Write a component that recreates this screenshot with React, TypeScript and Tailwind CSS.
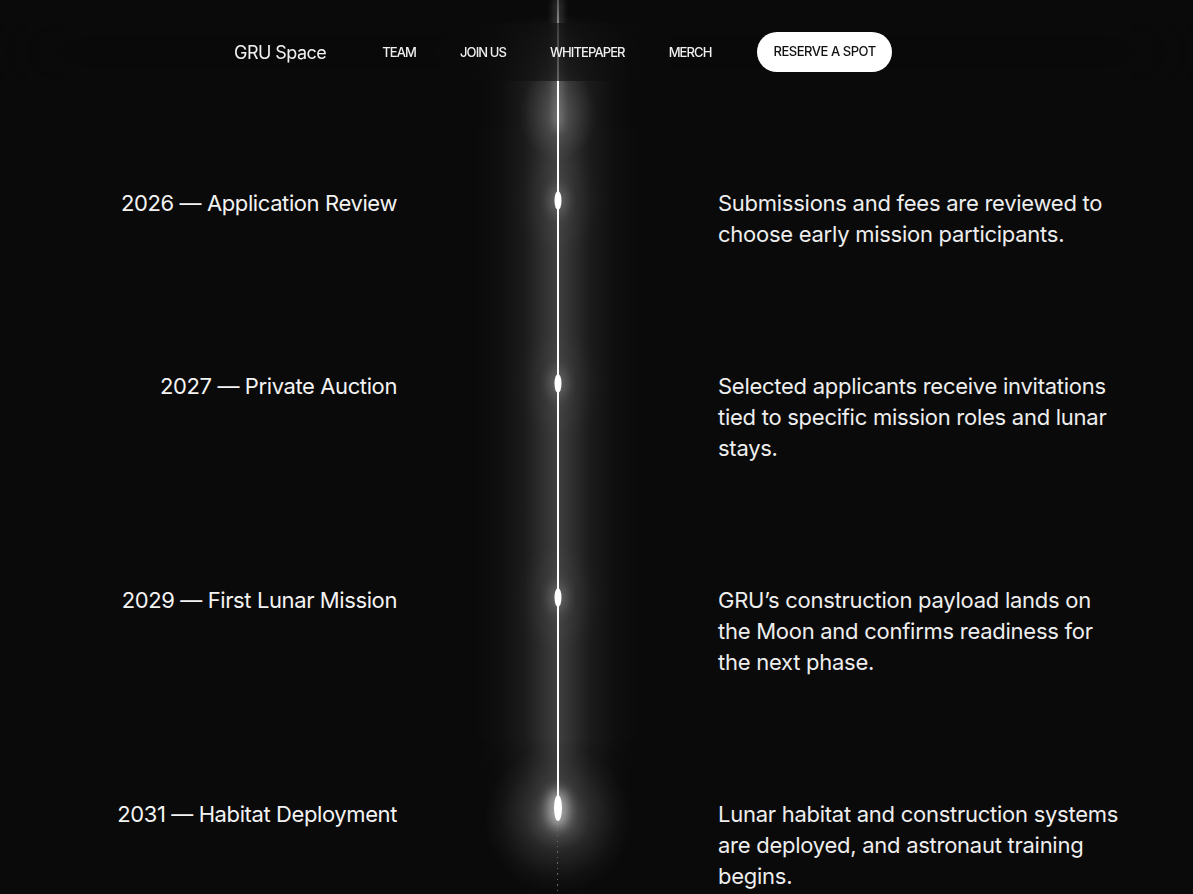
import React from "react";

type Milestone = {
  title: string;
  lines: string[];
};

const milestones: Milestone[] = [
  {
    title: "2026 — Application Review",
    lines: ["Submissions and fees are reviewed to", "choose early mission participants."],
  },
  {
    title: "2027 — Private Auction",
    lines: [
      "Selected applicants receive invitations",
      "tied to specific mission roles and lunar",
      "stays.",
    ],
  },
  {
    title: "2029 — First Lunar Mission",
    lines: [
      "GRU’s construction payload lands on",
      "the Moon and confirms readiness for",
      "the next phase.",
    ],
  },
  {
    title: "2031 — Habitat Deployment",
    lines: [
      "Lunar habitat and construction systems",
      "are deployed, and astronaut training",
      "begins.",
    ],
  },
];

// soft band of light that runs along the rail
const band =
  "bg-[linear-gradient(90deg,transparent_24%,rgba(255,255,255,0.02)_32%,rgba(255,255,255,0.07)_40%,rgba(255,255,255,0.16)_46%,rgba(255,255,255,0.22)_50%,rgba(255,255,255,0.16)_54%,rgba(255,255,255,0.07)_60%,rgba(255,255,255,0.02)_68%,transparent_76%)]";

const Nav: React.FC = () => (
  <header className="absolute inset-x-0 top-[23px] z-20 flex h-[58px] items-center bg-[#0a0a0a]/40 pl-[234px] backdrop-blur-2xl">
    <div className="text-[18px] tracking-[-0.03em] text-[#f2f2f2]">GRU Space</div>
    <nav className="ml-[56px] mt-[2px] flex items-center gap-[44px] text-[13px] font-medium tracking-[-0.07em] text-[#f0f0f0]">
      <a>TEAM</a>
      <a>JOIN US</a>
      <a>WHITEPAPER</a>
      <a>MERCH</a>
    </nav>
    <button className="ml-[46px] flex h-[40px] items-center rounded-full bg-white px-[16px] text-[13px] font-medium tracking-[-0.035em] text-[#111]">
      RESERVE A SPOT
    </button>
  </header>
);

const Dot: React.FC<{ last?: boolean }> = ({ last }) =>
  last ? (
    <span className="absolute left-1/2 top-[56px] z-10 h-[26px] w-[8px] -translate-x-1/2 rounded-[50%] bg-white shadow-[0_0_12px_6px_rgba(255,255,255,0.5)]" />
  ) : (
    <span className="absolute left-1/2 top-[63px] z-10 h-[19px] w-[7px] -translate-x-1/2 rounded-[50%] bg-white shadow-[0_0_12px_5px_rgba(255,255,255,0.18),0_0_40px_22px_rgba(255,255,255,0.06)]" />
  );

const App: React.FC = () => {
  return (
    <div className="relative min-h-screen overflow-hidden bg-[#0a0a0a] font-['Inter','Liberation_Sans',sans-serif]">
      <Nav />

      <main className="grid grid-cols-[397px_321px_1fr]">
        {/* rail above the first milestone */}
        <div />
        <div className="relative flex h-[127.5px] justify-center">
          <span
            className={`absolute inset-0 ${band} [mask-image:linear-gradient(180deg,transparent_10%,black_60%)]`}
          />
          <span className="absolute left-1/2 top-[70px] h-[90px] w-[80px] -translate-x-1/2 bg-[radial-gradient(ellipse_at_center,rgba(255,255,255,0.15),transparent_70%)]" />
          <div className="relative w-[2px] bg-[linear-gradient(180deg,#555_0%,#888_18%,#ffffff_40%)] shadow-[0_0_8px_2px_rgba(255,255,255,0.25)]" />
        </div>
        <div />

        {milestones.map((m, i) => {
          const last = i === milestones.length - 1;
          return (
            <React.Fragment key={m.title}>
              <div className="py-[60.5px] text-right text-[22px] leading-[31px] tracking-[-0.018em] text-[#f3f3f3]">
                {m.title}
              </div>
              <div className="relative flex flex-col items-center">
                {last ? (
                  <>
                    <span
                      className={`absolute inset-x-0 top-0 h-[110px] ${band} [mask-image:linear-gradient(180deg,black,transparent)]`}
                    />
                    <span className="absolute left-1/2 top-[5px] h-[150px] w-[150px] -translate-x-1/2 bg-[radial-gradient(ellipse_at_center,rgba(255,255,255,0.32),rgba(255,255,255,0.12)_30%,rgba(255,255,255,0.03)_55%,transparent_70%)]" />
                    <div className="relative h-[74px] w-[2px] bg-white" />
                    <div className="relative w-[1px] flex-1 bg-[repeating-linear-gradient(180deg,#666_0_1px,transparent_1px_5.5px)]" />
                  </>
                ) : (
                  <>
                    <span className={`absolute inset-0 ${band}`} />
                    <div className="relative w-[2px] flex-1 bg-white" />
                  </>
                )}
                <Dot last={last} />
              </div>
              <div className="py-[60.5px] text-[22px] leading-[31px] tracking-[-0.012em] text-[#eeeeee]">
                {m.lines.map((l) => (
                  <div key={l}>{l}</div>
                ))}
              </div>
            </React.Fragment>
          );
        })}
      </main>
    </div>
  );
};

export default App;
